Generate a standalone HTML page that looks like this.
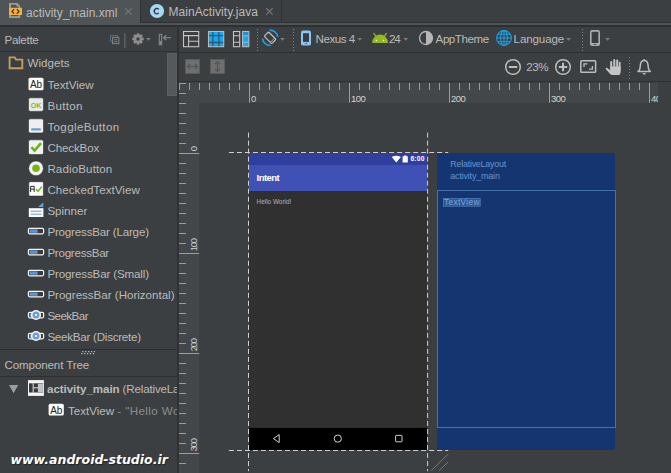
<!DOCTYPE html>
<html><head><meta charset="utf-8">
<style>
*{box-sizing:border-box;margin:0;padding:0}
html,body{width:671px;height:473px;overflow:hidden;background:#3c3f41}
body{position:relative;font-family:"Liberation Sans",sans-serif;font-size:11.6px;color:#bbbbbb}
.abs{position:absolute}
svg{position:absolute;overflow:visible}
.t{position:absolute;white-space:nowrap;line-height:1}
#tabbar{left:0;top:0;width:671px;height:26px;background:#4f5456}
#tab2{left:140px;top:0;width:531px;height:23px;background:#3c3f41;border-left:1px solid #2f3133;border-bottom:1px solid #2f3133}
#tab2sep{left:281px;top:0;width:1px;height:22px;background:#2f3133}
#tabline{left:0;top:25.4px;width:671px;height:1.6px;background:#2d2f31}
.tabt{font-size:12px;color:#bbbbbb}
#left{left:0;top:27px;width:178px;height:446px;overflow:hidden;background:#3c3f41}
#leftdiv{left:177.4px;top:27px;width:1.6px;height:446px;background:#2f3133}
.hsep{height:1px;background:#2d2f30}
.row{position:absolute;left:47.4px;white-space:nowrap;line-height:1;color:#bbbbbb}
</style></head><body>
<!-- TAB BAR -->
<div class="abs" id="tabbar"></div>
<div class="abs" id="tab2"></div>
<div class="abs" id="tab2sep"></div>
<div class="abs" id="tabline"></div>
<svg style="left:0;top:0" width="140" height="26" viewBox="0 0 140 26">
  <path d="M9 8 V3 H17.4 L20.2 5.8 V8 H18.6 V6.6 H16.4 V4.8 H11 V8 Z M9 15 H20.2 V18 H9 Z" fill="#9b9b9b"/><path d="M11 15 H18.4 V16.2 H11 Z" fill="#4f5456"/>
  <rect x="9" y="7.8" width="13" height="7.2" fill="#f4af3d"/>
  <path d="M14.2 9.2 L12 11.4 L14.2 13.6 M16.8 9.2 L19 11.4 L16.8 13.6" fill="none" stroke="#2b2b2b" stroke-width="1.1"/>
  <path d="M125.2 8.2 L131.6 14.6 M131.6 8.2 L125.2 14.6" stroke="#737373" stroke-width="1.3"/>
</svg>
<div class="t tabt" id="tt1" style="left:26px;top:6.6px">activity_main.xml</div>
<svg style="left:140px;top:0" width="140" height="26" viewBox="0 0 140 26">
  <circle cx="17" cy="11" r="7.1" fill="#a5d7f6"/>
  <path d="M18.7 9.4 A2.5 2.7 0 1 0 18.7 12.9" fill="none" stroke="#2f3133" stroke-width="1.3"/>
  <path d="M126.2 8.2 L132.6 14.6 M132.6 8.2 L126.2 14.6" stroke="#737373" stroke-width="1.3"/>
</svg>
<div class="t tabt" id="tt2" style="left:168.4px;top:5.6px;letter-spacing:0.07px">MainActivity.java</div>

<!-- LEFT PANEL -->
<div class="abs" id="left">
 <div style="position:absolute;left:0;top:-27px;width:178px;height:473px">
  <div class="t" id="tp" style="left:4.5px;top:34.2px;letter-spacing:-0.3px">Palette</div>
  <!-- header icons -->
  <svg style="left:100px;top:26px" width="78" height="26" viewBox="100 26 78 26">
    <path d="M112 41.2 H110.4 V35.6 H117.6 V37" fill="none" stroke="#56738a" stroke-width="1"/>
    <rect x="112.6" y="37.4" width="6.2" height="6.2" fill="none" stroke="#878787" stroke-width="1"/>
    <path d="M114.4 39.7 H117.2 M114.4 41.6 H117.2" stroke="#878787" stroke-width="0.9"/>
    <rect x="124" y="33" width="1.6" height="15" fill="#5c5f61"/>
    <g fill="#8d8d8d">
      <circle cx="138" cy="39" r="4.4"/>
      <g transform="translate(138 39)">
        <rect x="-1.3" y="-5.7" width="2.6" height="11.4"/>
        <rect x="-1.3" y="-5.7" width="2.6" height="11.4" transform="rotate(45)"/>
        <rect x="-1.3" y="-5.7" width="2.6" height="11.4" transform="rotate(90)"/>
        <rect x="-1.3" y="-5.7" width="2.6" height="11.4" transform="rotate(135)"/>
      </g>
    </g>
    <circle cx="138" cy="39" r="1.7" fill="#3c3f41"/>
    <path d="M146.2 38 H150.8 L148.5 40.8 Z" fill="#7d7d7d"/>
    <rect x="159.3" y="34.4" width="2.4" height="10.4" fill="none" stroke="#8d8d8d" stroke-width="1"/>
    <rect x="159.8" y="41" width="1.4" height="3.4" fill="#8d8d8d"/>
    <path d="M163.6 37.7 H171 M166.3 35.2 L163.6 37.7 L166.3 40.2" fill="none" stroke="#8d8d8d" stroke-width="1.1"/>
  </svg>
  <div class="abs hsep" style="left:0;top:51px;width:178px"></div>
  <div class="abs" style="left:167px;top:53px;width:10px;height:43px;background:#56585a;border:1px solid #5c5e60"></div>
  <!-- folder -->
  <svg style="left:0;top:52px" width="60" height="300" viewBox="0 52 60 300">
    <path d="M9.6 68.2 V57.4 H14.8 L16 59.6 H22.3 V68.2 Z" fill="none" stroke="#c39c5f" stroke-width="1.9"/>
    <!-- TextView Ab -->
    <rect x="28.5" y="77.7" width="15" height="12.6" rx="1.6" fill="#fdfdfd"/>
    <text x="36" y="88" text-anchor="middle" font-size="10" fill="#222" font-family="Liberation Sans, sans-serif" textLength="12">Ab</text>
    <!-- Button OK -->
    <rect x="28.5" y="97.8" width="15" height="13.6" rx="1.8" fill="#e9e9e9" stroke="#2e2e2e" stroke-width="0.6"/>
    <text x="36" y="108" text-anchor="middle" font-size="8" font-weight="bold" fill="#84b821" font-family="Liberation Sans, sans-serif" textLength="10.6" lengthAdjust="spacingAndGlyphs">OK</text>
    <!-- Toggle -->
    <rect x="28.5" y="118.8" width="15" height="14.2" rx="1.8" fill="#efefef" stroke="#2e2e2e" stroke-width="0.6"/>
    <rect x="31" y="128.2" width="10" height="2.2" rx="1" fill="#6b9ed2"/>
    <!-- Checkbox -->
    <rect x="28.5" y="139.8" width="15" height="14.8" rx="1.8" fill="#f1f1f1" stroke="#2e2e2e" stroke-width="0.6"/>
    <path d="M31.4 147.2 L34.6 150.6 L41 143.2" fill="none" stroke="#6bb11c" stroke-width="2.6"/>
    <!-- Radio -->
    <circle cx="36" cy="168.3" r="7.4" fill="#f4f4f4" stroke="#2e2e2e" stroke-width="0.6"/>
    <circle cx="36" cy="168.3" r="3.8" fill="#76b70f"/>
    <!-- CheckedTextView -->
    <rect x="28.8" y="181.7" width="14.6" height="14.4" rx="1.2" fill="#fbfbfb" stroke="#2e2e2e" stroke-width="0.6"/>
    <path d="M30.6 192 V186.4 H34.2 V192 M30.6 189.2 H34.2" fill="none" stroke="#2b2b2b" stroke-width="1"/>
    <path d="M36 189.2 L38 191.4 L41.8 186.6" fill="none" stroke="#6bb11c" stroke-width="1.5"/>
    <!-- Spinner -->
    <path d="M43.3 202.2 V207 H38 Z" fill="#6b9ed2"/>
    <rect x="28.8" y="208.2" width="14.6" height="8.8" fill="#fbfbfb"/>
    <path d="M30.6 211.2 H41.6 M30.6 214.2 H41.6" stroke="#6b9ed2" stroke-width="1"/>
    <!-- ProgressBars -->
    <g id="pb">
      <rect x="28.4" y="228.4" width="15.2" height="5.4" rx="1.2" fill="#3b3b3b" stroke="#f4f4f4" stroke-width="1.2"/>
      <rect x="29.6" y="229.4" width="8" height="3.4" fill="#5d95cf"/>
    </g>
    <use href="#pb" y="21"/>
    <use href="#pb" y="42"/>
    <use href="#pb" y="63"/>
    <!-- SeekBars -->
    <g id="sb">
      <rect x="28.4" y="312.4" width="15.2" height="5.4" rx="1.2" fill="#3b3b3b" stroke="#f4f4f4" stroke-width="1.2"/>
      <rect x="29.6" y="313.4" width="4" height="3.4" fill="#5d95cf"/>
      <circle cx="36" cy="315" r="4.3" fill="#6b9ed2" stroke="#f4f4f4" stroke-width="1.6"/>
      <circle cx="36" cy="315" r="1.1" fill="#fff"/>
    </g>
    <use href="#sb" y="21"/>
  </svg>
  <div class="t" id="tw" style="left:27.6px;top:56.7px">Widgets</div>
  <div class="row" style="top:79.0px;letter-spacing:0.01px">TextView</div>
  <div class="row" style="top:100.0px;letter-spacing:0.33px">Button</div>
  <div class="row" style="top:121.0px;letter-spacing:0.37px">ToggleButton</div>
  <div class="row" style="top:142.0px;letter-spacing:-0.13px">CheckBox</div>
  <div class="row" style="top:163.0px;letter-spacing:0.11px">RadioButton</div>
  <div class="row" style="top:184.0px;letter-spacing:0.03px">CheckedTextView</div>
  <div class="row" style="top:205.0px;letter-spacing:-0.01px">Spinner</div>
  <div class="row" style="top:226.0px;letter-spacing:-0.19px">ProgressBar (Large)</div>
  <div class="row" style="top:247.0px;letter-spacing:-0.26px">ProgressBar</div>
  <div class="row" style="top:268.0px;letter-spacing:-0.15px">ProgressBar (Small)</div>
  <div class="row" style="top:289.0px;letter-spacing:-0.02px">ProgressBar (Horizontal)</div>
  <div class="row" style="top:310.0px;letter-spacing:-0.55px">SeekBar</div>
  <div class="row" style="top:331.0px;letter-spacing:-0.25px">SeekBar (Discrete)</div>
  <div class="abs hsep" style="left:0;top:349px;width:178px"></div>
  <svg style="left:0;top:350px" width="120" height="6" viewBox="0 350 120 6"><g fill="#c2c2c2"><rect x="82.30" y="351" width="1.2" height="1.2"/><rect x="81.30" y="353" width="1.2" height="1.2"/><rect x="85.16" y="351" width="1.2" height="1.2"/><rect x="84.16" y="353" width="1.2" height="1.2"/><rect x="88.02" y="351" width="1.2" height="1.2"/><rect x="87.02" y="353" width="1.2" height="1.2"/><rect x="90.88" y="351" width="1.2" height="1.2"/><rect x="89.88" y="353" width="1.2" height="1.2"/><rect x="93.74" y="351" width="1.2" height="1.2"/><rect x="92.74" y="353" width="1.2" height="1.2"/></g></svg>
  <div class="t" id="tc" style="left:4.5px;top:358.8px;letter-spacing:-0.13px">Component Tree</div>
  <div class="abs hsep" style="left:0;top:376px;width:178px"></div>
  <svg style="left:0;top:376px" width="80" height="50" viewBox="0 376 80 50">
    <path d="M9 385 H18.2 L13.6 393.2 Z" fill="#9c9c9c"/>
    <rect x="28" y="380.1" width="15.9" height="15.8" fill="#f4f4f4"/>
    <rect x="29" y="383.3" width="13.9" height="9.2" fill="#3a3a3a"/>
    <rect x="32.7" y="383.3" width="0.9" height="9.2" fill="#f4f4f4"/>
    <rect x="33.5" y="387.4" width="4.5" height="0.9" fill="#f4f4f4"/>
    <rect x="37.9" y="383.7" width="5" height="8.6" fill="#c4c4c4"/>
    <rect x="48.6" y="403.8" width="15.2" height="11.8" rx="1.6" fill="#fdfdfd"/>
    <text x="56.2" y="413.6" text-anchor="middle" font-size="10" fill="#222" font-family="Liberation Sans, sans-serif" textLength="12">Ab</text>
  </svg>
  <div class="t" id="ta" style="left:47px;top:383.2px"><b style="letter-spacing:-0.07px">activity_main</b><span style="letter-spacing:-0.17px"> (RelativeLayout)</span></div>
  <div class="t" id="tv" style="left:68px;top:404.6px">TextView<span style="color:#8c8c8c;letter-spacing:0.4px;margin-left:-0.5px"> - "Hello World!"</span></div>
  <div class="t" id="wm" style="left:10.5px;top:451.7px;font:bold italic 12.5px 'DejaVu Sans',sans-serif;color:#fff;text-shadow:1px 1px 1px #222">www.android-studio.ir</div>
 </div>
</div>
<div class="abs" id="leftdiv"></div>

<!-- RIGHT: toolbars -->
<div class="abs hsep" style="left:179px;top:52px;width:492px"></div>
<div class="abs hsep" style="left:179px;top:81.2px;width:492px;height:1.3px;background:#2e3032"></div>
<svg style="left:179px;top:27px" width="492" height="55" viewBox="179 27 492 55">
  <!-- design icon -->
  <rect x="183.5" y="31.5" width="15.2" height="15.2" fill="#3b3d3f" stroke="#c4c4c4" stroke-width="1.1"/>
  <path d="M183.5 35.6 H198.7 M188.6 35.6 V46.7 M188.6 41.2 H198.7" stroke="#c4c4c4" stroke-width="1.1" fill="none"/>
  <!-- blueprint icon -->
  <rect x="208.5" y="31.5" width="15.2" height="15.2" fill="#19a7ee" stroke="#b9b9b9" stroke-width="1.1"/>
  <path d="M212.9 32 V46.2 M218.9 32 V46.2 M209 35.6 H223.2 M209 42.5 H223.2" stroke="#255a7b" stroke-width="1.3"/>
  <!-- both icon -->
  <rect x="233.5" y="31.5" width="6.2" height="15.2" fill="#3b3d3f" stroke="#c4c4c4" stroke-width="1.1"/>
  <path d="M233.5 35.8 H239.7 M233.5 42.2 H239.7" stroke="#c4c4c4" stroke-width="1.1"/>
  <rect x="242.6" y="31.5" width="6.2" height="15.2" fill="#19a7ee" stroke="#b9b9b9" stroke-width="1.1"/>
  <rect x="243.2" y="32" width="5" height="3.4" fill="#1b90d4"/><path d="M243.2 35.8 H248.2 M243.2 42.2 H248.2" stroke="#7cc4ec" stroke-width="1"/>
  <!-- dotted seps -->
  <g stroke="#808080" stroke-width="1" stroke-dasharray="1 2">
    <path d="M257.5 29 V51"/><path d="M293.5 29 V51"/><path d="M582.5 29 V51"/><path d="M629.5 57 V79"/>
  </g>
  <!-- rotate icon -->
  <g transform="translate(270.1 37.8)">
    <path d="M-0.66 -7.57 A7.6 7.6 0 0 1 7.56 -0.79" fill="none" stroke="#1e9fe3" stroke-width="1.7"/>
    <path d="M0.66 7.57 A7.6 7.6 0 0 1 -7.56 0.79" fill="none" stroke="#1e9fe3" stroke-width="1.7"/>
    <g transform="rotate(-45)">
      <rect x="-3.1" y="-5.3" width="6.2" height="10.6" rx="1.2" fill="#3c3f41" stroke="#bdbdbd" stroke-width="1.25"/>
      <path d="M-2.8 3.4 H2.8" stroke="#bdbdbd" stroke-width="0.8"/>
    </g>
  </g>
  <path d="M280 38 H284.8 L282.4 40.8 Z" fill="#7a7a7a"/>
  <!-- phone icon blue -->
  <rect x="301" y="30.6" width="10" height="15" rx="2.2" fill="#8cc5f5"/>
  <rect x="303" y="33.2" width="6" height="8.7" fill="#3a3d3f"/>
  <ellipse cx="306" cy="43.6" rx="1.5" ry="0.45" fill="#3a3d3f"/>
  <path d="M357.4 38 H362.2 L359.8 40.8 Z" fill="#7a7a7a"/>
  <!-- android -->
  <path d="M372.2 42.9 A7.9 8.3 0 0 1 388 42.9 Z" fill="#93b91e"/>
  <path d="M375.8 36.4 L373.6 33 M384.4 36.4 L386.6 33" stroke="#93b91e" stroke-width="1.3"/>
  <circle cx="376.4" cy="40.5" r="0.8" fill="#fff"/><circle cx="383.5" cy="40.5" r="0.8" fill="#fff"/>
  <path d="M403.3 38 H408.1 L405.7 40.8 Z" fill="#7a7a7a"/>
  <!-- theme -->
  <circle cx="426" cy="38" r="6.5" fill="#3a3d3f" stroke="#b6b6b6" stroke-width="1.3"/>
  <path d="M426 31.5 A6.5 6.5 0 0 1 426 44.5 Z" fill="#b6b6b6"/>
  <!-- globe -->
  <g fill="none" stroke="#1ba2e6" stroke-width="1.05">
    <circle cx="504" cy="38" r="7.4"/>
    <ellipse cx="504" cy="38" rx="3.4" ry="7.4"/>
    <path d="M504 30.6 V45.4 M496.6 38 H511.4 M497.8 34.2 H510.2 M497.8 41.8 H510.2"/>
  </g>
  <path d="M566 38 H571 L568.5 40.8 Z" fill="#7a7a7a"/>
  <!-- phone gray -->
  <rect x="590" y="30" width="10" height="15.9" rx="2.2" fill="#adadad"/>
  <rect x="591.6" y="31.8" width="6.8" height="11.3" rx="0.5" fill="#3a3d3f"/>
  <rect x="593.6" y="44" width="2.8" height="0.8" fill="#3a3d3f"/>
  <path d="M605.2 38 H610 L607.6 40.8 Z" fill="#7a7a7a"/>

  <!-- row 2 -->
  <rect x="185.4" y="59.4" width="14.2" height="14.2" fill="#6f6f6f" stroke="#5c5c5c" stroke-width="0.8"/>
  <path d="M187.6 66.5 H197.4 M190 64 L187.6 66.5 L190 69 M195 64 L197.4 66.5 L195 69" fill="none" stroke="#515456" stroke-width="1.1"/>
  <rect x="210.4" y="59.4" width="14.2" height="14.2" fill="#6f6f6f" stroke="#5c5c5c" stroke-width="0.8"/>
  <path d="M217.5 61.6 V71.4 M215 64 L217.5 61.6 L220 64 M215 69 L217.5 71.4 L220 69" fill="none" stroke="#515456" stroke-width="1.1"/>
  <!-- zoom out/in -->
  <circle cx="513" cy="67" r="7.3" fill="none" stroke="#bdbdbd" stroke-width="1.5"/>
  <path d="M508.8 67 H517.2" stroke="#bdbdbd" stroke-width="2"/>
  <circle cx="563" cy="67" r="7.3" fill="none" stroke="#bdbdbd" stroke-width="1.5"/>
  <path d="M558.8 67 H567.2 M563 62.8 V71.2" stroke="#bdbdbd" stroke-width="2"/>
  <!-- fit -->
  <rect x="580.8" y="60.8" width="14.8" height="11.4" rx="0.8" fill="none" stroke="#bdbdbd" stroke-width="1.5"/>
  <path d="M584 67 V63.8 H587.4 M592.4 66 V69.2 H589" fill="none" stroke="#bdbdbd" stroke-width="1.3"/>
  <!-- hand -->
  <g fill="#c4c4c4">
    <rect x="610.2" y="61" width="2" height="9" rx="1"/>
    <rect x="613.3" y="59" width="2" height="10" rx="1"/>
    <rect x="616.2" y="59.6" width="2" height="10" rx="1"/>
    <rect x="618.8" y="61.8" width="1.8" height="9" rx="0.9"/>
    <path d="M610.2 66.5 H620.6 V71.6 C620.6 73.6 620 75 618.8 75 H612.4 C610.6 75 608.4 72 605.9 69.2 C605.3 68.4 606.3 67.4 607.2 67.9 L610.2 70.2 Z"/>
  </g>
  <!-- bell -->
  <path d="M638 71.4 C640.2 70.2 640.2 68 640.3 65.4 C640.5 62.2 642 60.4 644.2 60.4 C646.4 60.4 647.9 62.2 648.1 65.4 C648.2 68 648.2 70.2 650.4 71.4 Z" fill="none" stroke="#bdbdbd" stroke-width="1.5" stroke-linejoin="round"/>
  <path d="M644.2 60.4 V59.2" stroke="#bdbdbd" stroke-width="1.6"/>
  <path d="M642.8 73.7 H645.6" stroke="#bdbdbd" stroke-width="1.4"/>
</svg>
<div class="t" id="tn" style="left:315.6px;top:32.6px;letter-spacing:-0.5px">Nexus 4</div>
<div class="t" id="t24" style="left:388.9px;top:32.6px;letter-spacing:-1px">24</div>
<div class="t" id="tat" style="left:435.6px;top:32.6px;letter-spacing:-0.45px">AppTheme</div>
<div class="t" id="tl" style="left:513.6px;top:32.6px;letter-spacing:-0.14px">Language</div>
<div class="t" id="tz" style="left:526.2px;top:60.8px;letter-spacing:-0.4px">23%</div>

<!-- CANVAS -->
<div class="abs" style="left:179px;top:83px;width:492px;height:390px;background:#3b3f41"></div>
<svg style="left:0;top:0" width="671" height="473" viewBox="0 0 671 473">
<rect x="179" y="82.6" width="479.2" height="20.2" fill="#43474a"/>
<rect x="179" y="82.6" width="20.2" height="390.4" fill="#43474a"/>
<path d="M179.5 83 V90 M189.5 83 V90 M199.5 83 V90 M209.5 83 V90 M219.5 83 V90 M229.5 83 V90 M239.5 83 V90 M249.5 83 V102.8 M259.5 83 V90 M269.5 83 V90 M279.5 83 V90 M289.5 83 V90 M299.5 83 V90 M309.5 83 V90 M319.5 83 V90 M329.5 83 V90 M339.5 83 V90 M349.5 83 V102.8 M359.5 83 V90 M369.5 83 V90 M379.5 83 V90 M389.5 83 V90 M399.5 83 V90 M409.5 83 V90 M419.5 83 V90 M429.5 83 V90 M439.5 83 V90 M449.5 83 V102.8 M459.5 83 V90 M469.5 83 V90 M479.5 83 V90 M489.5 83 V90 M499.5 83 V90 M509.5 83 V90 M519.5 83 V90 M529.5 83 V90 M539.5 83 V90 M549.5 83 V102.8 M559.5 83 V90 M569.5 83 V90 M579.5 83 V90 M589.5 83 V90 M599.5 83 V90 M609.5 83 V90 M619.5 83 V90 M629.5 83 V90 M639.5 83 V90 M649.5 83 V102.8" stroke="#9c9c9c" stroke-width="1" fill="none"/>
<path d="M179 83.5 H186 M179 93.5 H186 M179 103.5 H186 M179 113.5 H186 M179 123.5 H186 M179 133.5 H186 M179 143.5 H186 M179 153.5 H199.2 M179 163.5 H186 M179 173.5 H186 M179 183.5 H186 M179 193.5 H186 M179 203.5 H186 M179 213.5 H186 M179 223.5 H186 M179 233.5 H186 M179 243.5 H186 M179 253.5 H199.2 M179 263.5 H186 M179 273.5 H186 M179 283.5 H186 M179 293.5 H186 M179 303.5 H186 M179 313.5 H186 M179 323.5 H186 M179 333.5 H186 M179 343.5 H186 M179 353.5 H199.2 M179 363.5 H186 M179 373.5 H186 M179 383.5 H186 M179 393.5 H186 M179 403.5 H186 M179 413.5 H186 M179 423.5 H186 M179 433.5 H186 M179 443.5 H186 M179 453.5 H199.2 M179 463.5 H186" stroke="#9c9c9c" stroke-width="1" fill="none"/>
<g font-family="Liberation Sans, sans-serif" font-size="9.5" fill="#d2d2d2" letter-spacing="-0.5">
<text x="251.0" y="101.8">0</text>
<text x="351.0" y="101.8">100</text>
<text x="451.0" y="101.8">200</text>
<text x="551.0" y="101.8">300</text>
<text x="651.0" y="101.8">400</text>
<text letter-spacing="-1.3" transform="translate(197 151.3) rotate(-90)">0</text>
<text letter-spacing="-1.3" transform="translate(197 251.3) rotate(-90)">100</text>
<text letter-spacing="-1.3" transform="translate(197 351.3) rotate(-90)">200</text>
<text letter-spacing="-1.3" transform="translate(197 451.3) rotate(-90)">300</text>
</g>
<rect x="658.2" y="83" width="13" height="20" fill="#3b3f41"/>
<rect x="249" y="153" width="178.1" height="297" fill="#303030"/>
<rect x="249" y="153" width="178.1" height="12" fill="#303f9f"/>
<rect x="249" y="165" width="178.1" height="26" fill="#3f51b5"/>
<rect x="249" y="427.9" width="178.1" height="22.1" fill="#000"/>
<path d="M279.2 434.6 V442.6 L273.4 438.6 Z" fill="none" stroke="#e6e6e6" stroke-width="0.9"/>
<circle cx="337.8" cy="438.6" r="3.6" fill="none" stroke="#e6e6e6" stroke-width="0.9"/>
<rect x="395.6" y="435.4" width="6.4" height="6.4" rx="0.6" fill="none" stroke="#e6e6e6" stroke-width="0.9"/>
<path d="M391.7 157 L396.3 162.4 L400.9 157 C398 155.2 394.6 155.2 391.7 157 Z" fill="#fff"/>
<path d="M402.6 156.2 H404 V155.4 H406.4 V156.2 H407.8 V162.6 H402.6 Z" fill="#fff"/>
<rect x="437" y="153" width="178" height="296.8" fill="#143570"/>
<rect x="437.5" y="190.5" width="178" height="237" fill="none" stroke="#4673ad" stroke-width="1"/>
<rect x="443.6" y="198.4" width="36.6" height="7.8" fill="#2f5590" stroke="#5f8cc6" stroke-width="0.6"/>
<g stroke="#cfcfcf" stroke-width="1" stroke-dasharray="5.05 2.96" fill="none">
<path d="M248.5 132.6 V471.2"/>
<path d="M427.6 132.6 V471.2"/>
<path d="M228.9 152.5 H448.2"/>
<path d="M228.9 450.5 H448.2"/>
</g>
<path d="M431.3 470.6 L448.2 454.2 M439.2 470.6 L448.2 461.9" stroke="#77797b" stroke-width="1"/>
</svg>
<div class="t" id="ti" style="left:256.6px;top:172.6px;font-size:9.5px;font-weight:bold;color:#fff;letter-spacing:-0.55px">Intent</div>
<div class="t" id="th" style="left:256.6px;top:198.6px;font-size:6.4px;color:#b4b4b4">Hello World!</div>
<div class="t" id="t6" style="left:410.4px;top:156px;font-size:6.7px;font-weight:bold;color:#fff;letter-spacing:0.2px">6:00</div>
<div class="t" id="tr" style="left:450.3px;top:159.6px;font-size:9px;color:#6494d0;letter-spacing:-0.28px">RelativeLayout</div>
<div class="t" id="tm" style="left:450.3px;top:171.5px;font-size:9px;color:#6494d0;letter-spacing:-0.2px">activity_main</div>
<div class="t" id="tx" style="left:444px;top:198.4px;font-size:8.4px;color:#7ea6da;letter-spacing:0.3px">TextView</div>
</body></html>
